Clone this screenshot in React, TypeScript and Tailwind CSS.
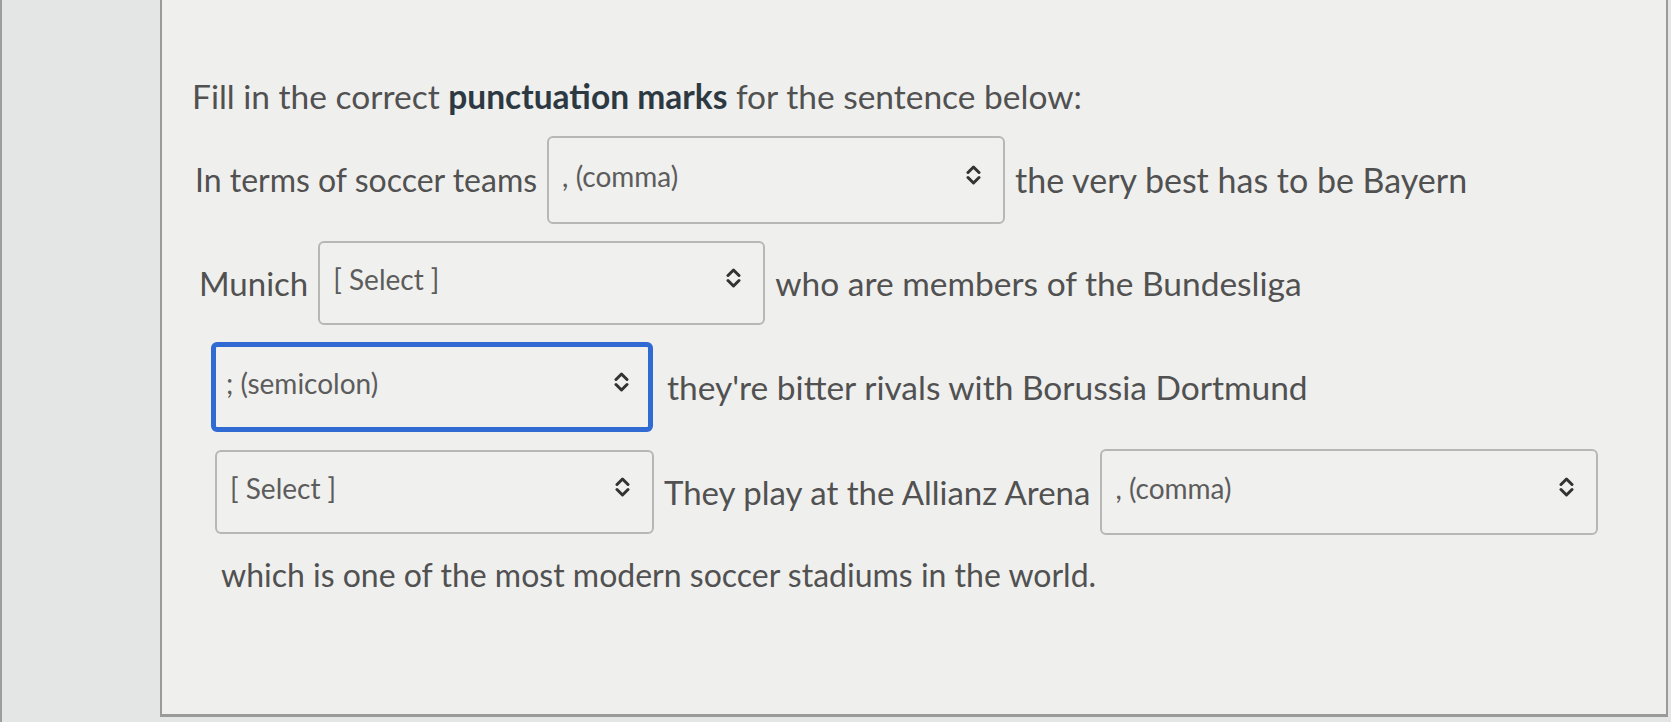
import React from "react";

function Chevrons() {
  return (
    <svg width="15" height="22" viewBox="0 0 15 22" fill="none" stroke="#333333" strokeWidth="3" strokeLinecap="round" strokeLinejoin="round">
      <path d="M2 8.5 L7.5 3 L13 8.5" />
      <path d="M2 13.5 L7.5 19 L13 13.5" />
    </svg>
  );
}

function Sel({ label, w, h, focus }: { label: string; w: string; h: string; focus?: boolean }) {
  return (
    <div
      className={
        "flex items-center justify-between rounded-[6px] bg-[#f0f0ee] shrink-0 " +
        w +
        " " +
        h +
        (focus
          ? " border-[5px] border-[#2f6bd3] pl-[10px] pr-[19px]"
          : " border-2 border-[#b7b8b6] pl-[13px] pr-[22px]")
      }
    >
      <span className="text-[28px] leading-[36px] text-[#5c5c5c] -mt-[8px]">{label}</span>
      <span className="-mt-[10px]">
        <Chevrons />
      </span>
    </div>
  );
}

export default function App() {
  return (
    <div
      className="w-[1671px] h-[722px] bg-[#e4e6e6] overflow-hidden border-l-2 border-[#9c9e9e]"
      style={{ fontFamily: "Lato, 'Open Sans', sans-serif" }}
    >
      <div className="ml-[158px] w-[1508px] h-[717px] bg-[#efefed] border-l-2 border-r-2 border-b-[3px] border-[#9a9b99] pl-[30px] pt-[76px]">
        <div className="text-[33.5px] text-[#515151] leading-[40px] h-[40px] whitespace-nowrap">
          Fill in the correct <span className="font-bold text-[#2d3942]">punctuation marks</span> for the sentence below:
        </div>
        <div className="flex flex-col gap-[17px] mt-[20px] text-[33px] text-[#515151] leading-[40px] whitespace-nowrap">
          <div className="flex items-center gap-[10px] pl-[3px]">
            <span className="text-[32px]">In terms of soccer teams</span>
            <Sel label=", (comma)" w="w-[458px]" h="h-[88px]" />
            <span className="text-[34px]">the very best has to be Bayern</span>
          </div>
          <div className="flex items-center gap-[10px] pl-[7px]">
            <span>Munich</span>
            <Sel label="[ Select ]" w="w-[447px]" h="h-[84px]" />
            <span className="text-[33.5px]">who are members of the Bundesliga</span>
          </div>
          <div className="flex items-center gap-[14px] pl-[19px]">
            <Sel label="; (semicolon)" w="w-[442px]" h="h-[90px]" focus />
            <span className="text-[33.5px]">they're bitter rivals with Borussia Dortmund</span>
          </div>
          <div className="flex items-center gap-[10px] pl-[23px]">
            <Sel label="[ Select ]" w="w-[439px]" h="h-[84px]" />
            <span>They play at the Allianz Arena</span>
            <Sel label=", (comma)" w="w-[498px]" h="h-[86px]" />
          </div>
          <div className="pl-[29px] pt-[3px] text-[32px]">which is one of the most modern soccer stadiums in the world.</div>
        </div>
      </div>
    </div>
  );
}
